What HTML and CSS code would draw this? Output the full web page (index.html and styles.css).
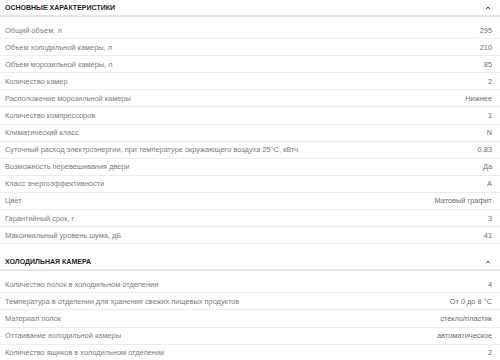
FILE: index.html
```html
<!DOCTYPE html>
<html lang="ru">
<head>
<meta charset="utf-8">
<link rel="stylesheet" href="styles.css">
</head>
<body>
<section class="section">
  <div class="section-head">
    <span class="section-title">ОСНОВНЫЕ ХАРАКТЕРИСТИКИ</span>
    <svg class="chev" width="6" height="4" viewBox="0 0 6 4"><polyline points="1,3.2 3,1 5,3.2" fill="none" stroke="#333" stroke-width="1"/></svg>
  </div>
  <div class="rows">
    <div class="row"><span class="name">Общий объем, л</span><span class="val">295</span></div>
    <div class="row"><span class="name">Объем холодильной камеры, л</span><span class="val">210</span></div>
    <div class="row"><span class="name">Объем морозильной камеры, л</span><span class="val">85</span></div>
    <div class="row"><span class="name">Количество камер</span><span class="val">2</span></div>
    <div class="row"><span class="name">Расположение морозильной камеры</span><span class="val">Нижнее</span></div>
    <div class="row"><span class="name">Количество компрессоров</span><span class="val">1</span></div>
    <div class="row"><span class="name">Климатический класс</span><span class="val">N</span></div>
    <div class="row"><span class="name">Суточный расход электроэнергии, при температуре окружающего воздуха 25°С, кВтч</span><span class="val">0.83</span></div>
    <div class="row"><span class="name">Возможность перевешивания двери</span><span class="val">Да</span></div>
    <div class="row"><span class="name">Класс энергоэффективности</span><span class="val">A</span></div>
    <div class="row"><span class="name">Цвет</span><span class="val">Матовый графит</span></div>
    <div class="row"><span class="name">Гарантийный срок, г</span><span class="val">3</span></div>
    <div class="row"><span class="name">Максимальный уровень шума, дБ</span><span class="val">41</span></div>
  </div>
</section>
<section class="section">
  <div class="section-head">
    <span class="section-title">ХОЛОДИЛЬНАЯ КАМЕРА</span>
    <svg class="chev" width="6" height="4" viewBox="0 0 6 4"><polyline points="1,3.2 3,1 5,3.2" fill="none" stroke="#333" stroke-width="1"/></svg>
  </div>
  <div class="rows">
    <div class="row"><span class="name">Количество полок в холодильном отделении</span><span class="val">4</span></div>
    <div class="row"><span class="name">Температура в отделении для хранения свежих пищевых продуктов</span><span class="val">От 0 до 8 °С</span></div>
    <div class="row"><span class="name">Материал полок</span><span class="val">стекло/пластик</span></div>
    <div class="row"><span class="name">Оттаивание холодильной камеры</span><span class="val">автоматическое</span></div>
    <div class="row"><span class="name">Количество ящиков в холодильном отделении</span><span class="val">2</span></div>
  </div>
</section>
</body>
</html>
```
FILE: styles.css
```css
html, body {
  margin: 0;
  padding: 0;
  background: #fff;
}
body {
  font-family: "Liberation Sans", Arial, sans-serif;
  color: #777;
}
.section {
  margin-bottom: 10px;
}
.section-head {
  display: flex;
  justify-content: space-between;
  align-items: center;
  height: 15px;
  padding: 0 9px 0 5px;
  border-bottom: 2px solid #e4e4e4;
}
.section-title {
  font-size: 7px;
  font-weight: bold;
  color: #1d1d2b;
}
.chev {
  display: block;
}
.rows {
  padding-top: 5px;
}
.row {
  display: flex;
  justify-content: space-between;
  align-items: center;
  height: 16.1px;
  padding: 0 8px 0 5px;
  border-bottom: 1px solid #ededed;
  font-size: 7.4px;
}
.name {
  color: #7c7c7c;
}
.val {
  color: #6e6e6e;
}
```
